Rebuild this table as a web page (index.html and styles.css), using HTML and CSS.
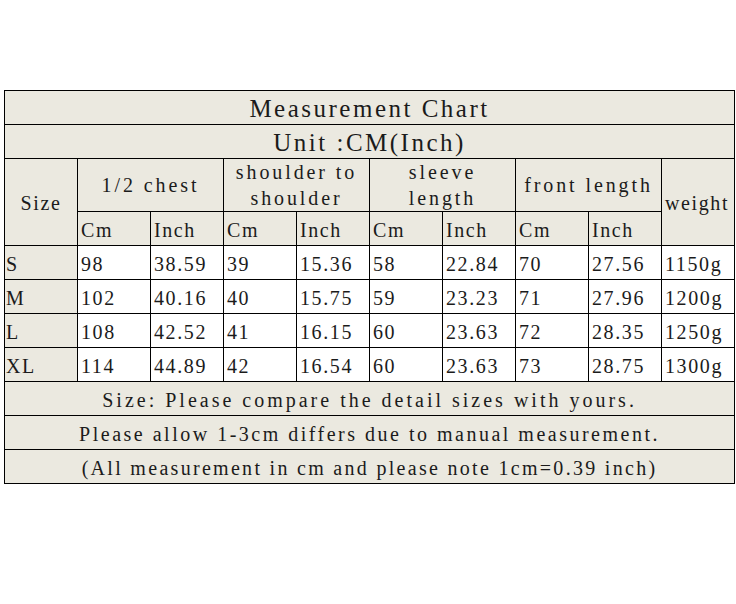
FILE: index.html
```html
<!DOCTYPE html>
<html>
<head>
<meta charset="utf-8">
<link rel="stylesheet" href="styles.css">
</head>
<body>
<div class="sheet">
<table class="chart">
  <colgroup>
    <col><col><col><col><col><col><col><col><col><col>
  </colgroup>
  <tr class="row-title"><td colspan="10" class="title">Measurement Chart</td></tr>
  <tr class="row-title"><td colspan="10" class="title">Unit :CM(Inch)</td></tr>
  <tr class="row-group">
    <td rowspan="2" class="head center">Size</td>
    <td colspan="2" class="head center group">1/2 chest</td>
    <td colspan="2" class="head center group">shoulder to<br>shoulder</td>
    <td colspan="2" class="head center group">sleeve<br>length</td>
    <td colspan="2" class="head center group">front length</td>
    <td rowspan="2" class="head">weight</td>
  </tr>
  <tr class="row">
    <td class="head">Cm</td><td class="head">Inch</td>
    <td class="head">Cm</td><td class="head">Inch</td>
    <td class="head">Cm</td><td class="head">Inch</td>
    <td class="head">Cm</td><td class="head">Inch</td>
  </tr>
  <tr class="row">
    <td class="head size">S</td><td>98</td><td>38.59</td><td>39</td><td>15.36</td><td>58</td><td>22.84</td><td>70</td><td>27.56</td><td>1150g</td>
  </tr>
  <tr class="row">
    <td class="head size">M</td><td>102</td><td>40.16</td><td>40</td><td>15.75</td><td>59</td><td>23.23</td><td>71</td><td>27.96</td><td>1200g</td>
  </tr>
  <tr class="row">
    <td class="head size">L</td><td>108</td><td>42.52</td><td>41</td><td>16.15</td><td>60</td><td>23.63</td><td>72</td><td>28.35</td><td>1250g</td>
  </tr>
  <tr class="row">
    <td class="head size">XL</td><td>114</td><td>44.89</td><td>42</td><td>16.54</td><td>60</td><td>23.63</td><td>73</td><td>28.75</td><td>1300g</td>
  </tr>
  <tr class="row"><td colspan="10" class="head center note note-1">Size: Please compare the detail sizes with yours.</td></tr>
  <tr class="row"><td colspan="10" class="head center note note-2">Please allow 1-3cm differs due to manual measurement.</td></tr>
  <tr class="row"><td colspan="10" class="head center note note-3">(All measurement in cm and please note 1cm=0.39 inch)</td></tr>
</table>
</div>
</body>
</html>
```
FILE: styles.css
```css
html, body {
  margin: 0;
  padding: 0;
  background: #ffffff;
}

.sheet {
  padding: 90px 0 0 4px;
}

.chart {
  border-collapse: collapse;
  table-layout: fixed;
  width: 731px;
  font-family: "Liberation Serif", "Times New Roman", serif;
  font-size: 20px;
  letter-spacing: 1.6px;
  color: #1b1b1b;
}

.chart col {
  width: 73px;
}

.chart td {
  border: 1px solid #000;
  padding: 2px 0 0 3px;
  white-space: nowrap;
  overflow: hidden;
  background: #ffffff;
  vertical-align: middle;
  line-height: 26px;
}

.chart td.head {
  background: #ebe9e0;
}

.chart td.size {
  padding-left: 1px;
}

.chart td.center {
  text-align: center;
  padding-left: 0;
}

.chart td.group {
  padding-top: 0;
  letter-spacing: 2.9px;
}

.chart td.note-1 {
  letter-spacing: 3px;
}

.chart td.note-2 {
  letter-spacing: 2.5px;
}

.chart td.note-3 {
  letter-spacing: 2.3px;
}

.chart td.title {
  background: #ebe9e0;
  text-align: center;
  padding: 2px 0 0 0;
  font-size: 25px;
  letter-spacing: 2.5px;
}

.row-title {
  height: 34px;
}

.row {
  height: 34px;
}

.row-group {
  height: 53px;
}
```
